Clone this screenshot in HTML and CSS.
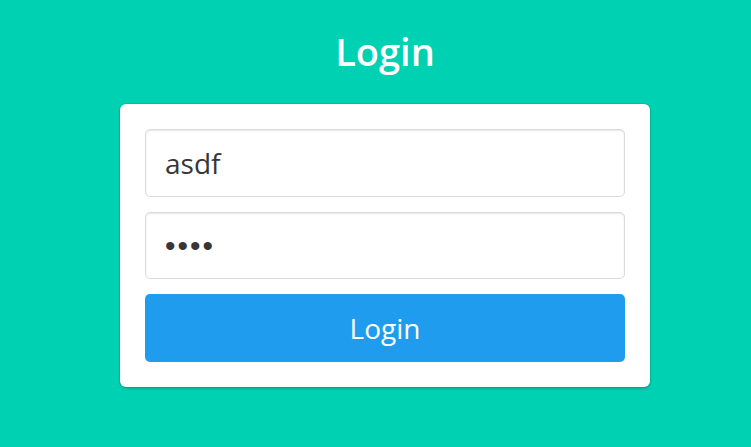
FILE: index.html
```html
<!DOCTYPE html>
<html lang="en">
<head>
<meta charset="utf-8">
<title>Login</title>
<link rel="stylesheet" href="styles.css">
</head>
<body>
<section class="hero">
  <div class="container">
    <h1 class="title">Login</h1>
    <form class="box">
      <input class="input" type="text" value="asdf">
      <input class="input input-password" type="password" value="asdf">
      <button class="button" type="button">Login</button>
    </form>
  </div>
</section>
</body>
</html>
```

FILE: styles.css
```css
html, body {
  margin: 0;
  padding: 0;
  height: 100%;
}
body {
  background: #00d1b2;
  font-family: "Open Sans", "Noto Sans", sans-serif;
}
.hero {
  min-height: 100%;
  padding: 28px 0 0 19px;
  box-sizing: border-box;
}
.container {
  width: 530px;
  margin: 0 auto;
  display: flex;
  flex-direction: column;
  align-items: stretch;
}
.title {
  margin: 0 0 30px;
  color: #fff;
  font-size: 38px;
  font-weight: 600;
  line-height: 46px;
  text-align: center;
}
.box {
  background: #fff;
  border-radius: 6px;
  box-shadow: 0 2px 3px rgba(10,10,10,.15), 0 0 0 1px rgba(10,10,10,.08);
  padding: 25px;
  display: flex;
  flex-direction: column;
  gap: 15px;
  margin: 0;
}
.input {
  height: 68px;
  box-sizing: border-box;
  border: 1px solid #dbdbdb;
  border-radius: 5px;
  box-shadow: inset 0 1px 2px rgba(10,10,10,.1);
  padding: 0 19px;
  font-family: inherit;
  font-size: 28px;
  color: #363636;
  background: #fff;
  outline: none;
  margin: 0;
}
.input-password {
  height: 67px;
  font-family: "Liberation Sans", Arial, sans-serif;
  font-size: 30px;
  letter-spacing: 2px;
  padding: 0 18px 0 19px;
}
.button {
  height: 68px;
  border: none;
  border-radius: 5px;
  background: #209cee;
  color: #fff;
  font-family: inherit;
  font-size: 28px;
  padding: 0;
  cursor: pointer;
  margin: 0;
}
```
